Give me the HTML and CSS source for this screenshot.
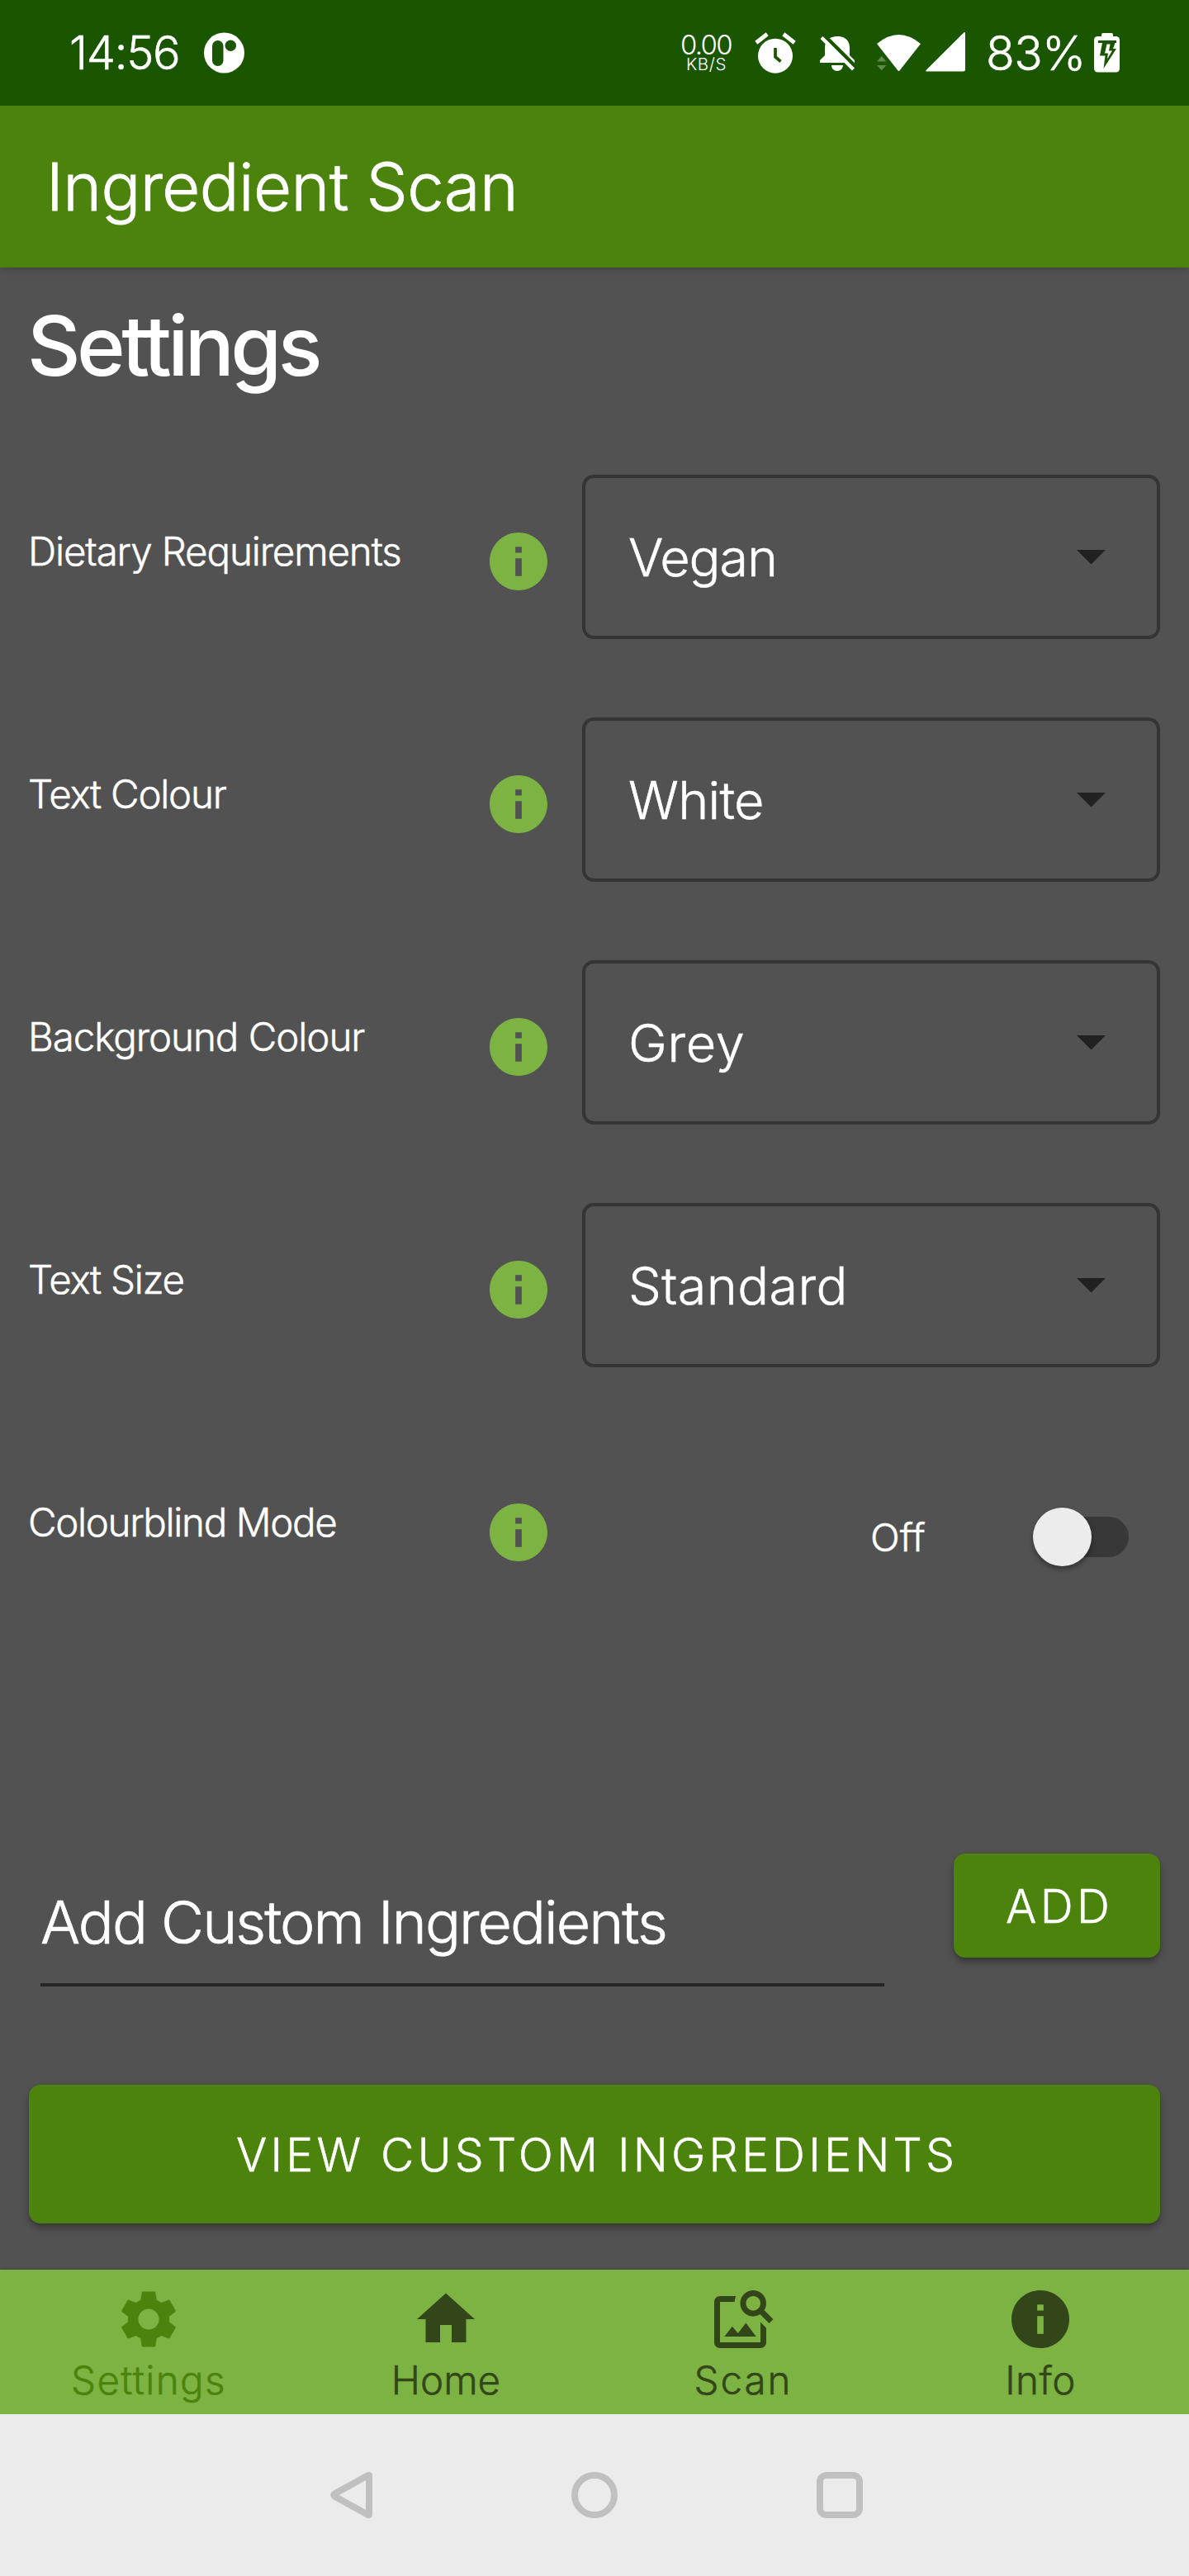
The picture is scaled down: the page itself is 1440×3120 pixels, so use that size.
FILE: index.html
```html
<!DOCTYPE html>
<html lang="en">
<head>
<meta charset="utf-8">
<title>Ingredient Scan</title>
<link rel="stylesheet" href="styles.css">
</head>
<body>
<svg class="defs" aria-hidden="true">
  <symbol id="info" viewBox="0 0 24 24"><path d="M12 2C6.48 2 2 6.48 2 12s4.48 10 10 10 10-4.48 10-10S17.52 2 12 2zm1.1 15.1h-2.2v-6.2h2.2v6.2zm0-8.1h-2.2V6.9h2.2V9z"/></symbol>
  <symbol id="arrow" viewBox="0 0 35 18"><path d="M0 0h35L17.5 17.5z"/></symbol>
</svg>
<div class="phone">
  <header class="status">
    <span class="time">14:56</span>
    <svg class="app-badge" width="49" height="50" viewBox="0 0 49 50"><circle cx="24.5" cy="25" r="24.5" fill="#fff"/><rect x="10" y="10" width="13.5" height="31" rx="6.7" fill="#1a5600"/><circle cx="32.3" cy="16.3" r="6.7" fill="#1a5600"/></svg>
    <div class="speed"><span class="rate">0.00</span><span class="unit">KB/S</span></div>
    <svg class="alarm" width="50" height="50" viewBox="0 0 50 50"><circle cx="25" cy="28.7" r="21" fill="#fff"/><path d="M1.8 12.8L15.2 2.2M48.2 12.8L34.8 2.2" stroke="#fff" stroke-width="5"/><path d="M25 19v11l6.5 5.5" fill="none" stroke="#1a5600" stroke-width="3.7"/></svg>
    <svg class="bell" width="43" height="50" viewBox="0 0 43 50"><path d="M0 37v-3l6-6V19C6 10 12 5 21 5s15 5 15 14v9l6 6v3zM14 40h14c0 4-3 7-7 7s-7-3-7-7z" fill="#fff"/><path d="M3.5 2L44 42.5" stroke="#1a5600" stroke-width="4.5"/><path d="M2 6.5L40.5 45" stroke="#fff" stroke-width="4.2"/></svg>
    <svg class="wifi" width="54" height="50" viewBox="0 0 54 50"><path d="M0 14Q26.5-8 53 14L27.5 46.5q-1 1-2 0z" fill="#fff"/><path d="M0 35.5h11.5L5.7 29zM0 40h11.5L5.7 46.3z" fill="#5e8a4c"/></svg>
    <svg class="signal" width="48" height="50" viewBox="0 0 48 50"><path d="M46 .7q2-1.5 2 .8V45q0 2.5-2.5 2.5H1.5Q-.7 47.5.8 45.7z" fill="#fff"/></svg>
    <span class="percent">83%</span>
    <svg class="battery" width="32" height="50" viewBox="0 0 32 50"><path d="M9 7V3q0-2 2-2h10q2 0 2 2v4z" fill="#fff"/><rect y="5" width="31" height="43.5" rx="4.5" fill="#fff"/><path d="M5 10h22v3h-1.5L23 20h4L11.500 44l2-15.500H7L10 13H5z" fill="#1a5600"/><path d="M15.500 14.500h4l-1.500 8h4L16 32.500l1-7h-4z" fill="#fff"/></svg>
  </header>
  <div class="appbar">Ingredient Scan</div>
  <main>
    <h1>Settings</h1>
    <section class="row">
      <span class="label dietary">Dietary Requirements</span><svg class="info"><use href="#info"/></svg>
      <div class="select"><span class="vegan">Vegan</span><svg class="arrow"><use href="#arrow"/></svg></div>
    </section>
    <section class="row">
      <span class="label">Text Colour</span><svg class="info"><use href="#info"/></svg>
      <div class="select"><span class="white">White</span><svg class="arrow"><use href="#arrow"/></svg></div>
    </section>
    <section class="row">
      <span class="label background">Background Colour</span><svg class="info"><use href="#info"/></svg>
      <div class="select"><span class="grey">Grey</span><svg class="arrow"><use href="#arrow"/></svg></div>
    </section>
    <section class="row">
      <span class="label">Text Size</span><svg class="info"><use href="#info"/></svg>
      <div class="select"><span class="standard">Standard</span><svg class="arrow"><use href="#arrow"/></svg></div>
    </section>
    <section class="row">
      <span class="label colourblind">Colourblind Mode</span><svg class="info"><use href="#info"/></svg>
      <div class="toggle"><span>Off</span><div class="track"><div class="thumb"></div></div></div>
    </section>
    <section class="custom">
      <div class="field">Add Custom Ingredients</div>
      <div class="btn add">ADD</div>
    </section>
    <div class="btn view">VIEW CUSTOM INGREDIENTS</div>
  </main>
  <nav class="tabs">
    <div class="tab active">
      <svg viewBox="0 0 24 24"><path d="M19.14 12.94c.04-.3.06-.61.06-.94 0-.32-.02-.64-.07-.94l2.03-1.58c.18-.14.23-.41.12-.61l-1.92-3.32c-.12-.22-.37-.29-.59-.22l-2.39.96c-.5-.38-1.03-.7-1.62-.94l-.36-2.54c-.04-.24-.24-.41-.48-.41h-3.84c-.24 0-.43.17-.47.41l-.36 2.54c-.59.24-1.13.57-1.62.94l-2.39-.96c-.22-.08-.47 0-.59.22L2.74 8.87c-.12.21-.08.47.12.61l2.03 1.58c-.05.3-.09.63-.09.94s.02.64.07.94l-2.03 1.58c-.18.14-.23.41-.12.61l1.92 3.32c.12.22.37.29.59.22l2.39-.96c.5.38 1.03.7 1.62.94l.36 2.54c.05.24.24.41.48.41h3.84c.24 0 .44-.17.47-.41l.36-2.54c.59-.24 1.13-.56 1.62-.94l2.39.96c.22.08.47 0 .59-.22l1.92-3.32c.12-.22.07-.47-.12-.61l-2.01-1.58zM12 15.6c-1.98 0-3.6-1.62-3.6-3.6s1.62-3.6 3.6-3.6 3.6 1.62 3.6 3.6-1.62 3.6-3.6 3.6z"/></svg>
      <span class="t-settings">Settings</span>
    </div>
    <div class="tab">
      <svg viewBox="0 0 24 24"><path d="M10 20v-6h4v6h5v-8h3L12 3 2 12h3v8z"/></svg>
      <span>Home</span>
    </div>
    <div class="tab">
      <svg viewBox="0 0 24 24"><path d="M18 13v7H4V6h5.02c.05-.71.22-1.38.48-2H4c-1.1 0-2 .9-2 2v14c0 1.1.9 2 2 2h14c1.1 0 2-.9 2-2v-5l-2-2zm-1.5 5h-11l2.75-3.53 1.96 2.36 2.75-3.54L16.5 18zm2.8-9.11c.44-.7.7-1.51.7-2.39C20 4.01 17.99 2 15.5 2S11 4.01 11 6.5s2.01 4.5 4.49 4.5c.88 0 1.7-.26 2.39-.7L21 13.42 22.42 12 19.3 8.89zM15.5 9C14.12 9 13 7.88 13 6.5S14.12 4 15.5 4 18 5.12 18 6.5 16.88 9 15.5 9z"/></svg>
      <span class="t-scan">Scan</span>
    </div>
    <div class="tab">
      <svg viewBox="0 0 24 24"><use href="#info"/></svg>
      <span class="t-info">Info</span>
    </div>
  </nav>
  <footer class="sysnav">
    <svg width="52" height="58" viewBox="0 0 52 58"><path d="M47 5.500v47Q47 54 45 52.500L6 31q-3.500-2 0-4L45 5.500Q47 4 47 5.500z"/></svg>
    <svg width="58" height="58" viewBox="0 0 58 58"><circle cx="29" cy="29" r="24"/></svg>
    <svg width="58" height="58" viewBox="0 0 58 58"><rect x="5" y="5" width="48" height="48" rx="8"/></svg>
  </footer>
</div>
</body>
</html>
```
FILE: styles.css
```css
* { box-sizing: border-box; }
body {
  margin: 0;
  background: #525252;
  color: #fff;
  font-family: Inter, "Liberation Sans", sans-serif;
  font-weight: 300;
  -webkit-text-stroke: .5px currentColor;
}
svg { display: block; flex: none; }
.defs { display: none; }
.phone { width: 1440px; height: 3120px; display: flex; flex-direction: column; overflow: hidden; white-space: nowrap; }

.status { position: relative; z-index: 1; height: 128px; display: flex; align-items: center; padding-left: 84px; background: #1a5600; flex: none; }
.time { width: 163px; font-size: 56px; letter-spacing: -1.3px; }
.speed { display: flex; flex-direction: column; margin-left: 528px; width: 90px; padding-top: 3px; -webkit-text-stroke-width: 0; }
.rate { font-size: 33px; line-height: 24px; letter-spacing: -1.7px; }
.unit { font-size: 20.5px; line-height: 23px; letter-spacing: .6px; padding-left: 7px; }
.bell { margin-left: 29px; }
.wifi { margin-left: 26px; }
.signal { margin-left: 5px; }
.percent { width: 131px; margin-left: 25px; font-size: 57px; letter-spacing: -.7px; }

.appbar {
  height: 196px; line-height: 196px; padding-left: 56px; flex: none;
  background: #4b830d; font-size: 79.5px; letter-spacing: -.6px;
  -webkit-text-stroke-width: .9px;
  box-shadow: 0 2px 12px rgba(0, 0, 0, .2);
}

main { flex: 1; padding: 0 35px; display: flex; flex-direction: column; }
h1 { margin: 0 0 15px; height: 189px; line-height: 189px; font-size: 100px; font-weight: 500; letter-spacing: -4.6px; text-indent: -2px; -webkit-text-stroke-width: 0; }

.row { height: 294px; display: flex; align-items: center; }
.label { width: 551px; padding-bottom: 15px; font-size: 47.5px; letter-spacing: -1.27px; text-indent: -1px; }
.dietary { letter-spacing: -1.15px; }
.background { letter-spacing: -1.07px; }
.colourblind { letter-spacing: -1.36px; }
.info { width: 84px; height: 84px; margin: 10px 35px 0 0; fill: #7cb342; }
.select {
  width: 700px; height: 199px; margin-top: -1px; border: 4px solid #353535; border-radius: 14px;
  display: flex; align-items: center; justify-content: space-between;
  padding: 1px 62px 0 52px; font-size: 63px;
}
.arrow { width: 35px; height: 18px; fill: #212121; }
.vegan { letter-spacing: -1.08px; }
.white { letter-spacing: -.74px; }
.grey { letter-spacing: .66px; }
.standard { letter-spacing: .4px; }

.toggle { width: 700px; padding: 21px 38px 0 0; display: flex; align-items: center; justify-content: flex-end; font-size: 47px; }
.toggle span { width: 202px; }
.track { width: 111px; height: 49px; border-radius: 25px; background: #383838; display: flex; align-items: center; }
.thumb { width: 71px; height: 71px; border-radius: 50%; margin-left: -5px; background: #ececec; box-shadow: 0 4px 6px rgba(0, 0, 0, .35); flex: none; }

.custom { margin-top: 247px; height: 161px; display: flex; justify-content: space-between; align-items: flex-start; padding-left: 14px; }
.field { width: 1022px; height: 161px; padding-top: 9px; border-bottom: 4px solid #262626; display: flex; align-items: center; font-size: 71.5px; letter-spacing: -1.97px; -webkit-text-stroke-width: .7px; }
.btn {
  display: flex; align-items: center; border-radius: 14px; background: #4b830d;
  box-shadow: 0 6px 9px rgba(0, 0, 0, .28), 0 1px 3px rgba(0, 0, 0, .15);
  font-size: 55.5px;
}
.add { width: 250px; height: 126px; padding-left: 63px; letter-spacing: 4.36px; }
.view { margin-top: 119px; height: 168px; padding-left: 251px; letter-spacing: 4.18px; }

.tabs { height: 175px; flex: none; display: flex; background: #7cb342; color: #33461a; box-shadow: 0 0 6px rgba(0, 0, 0, .22); }
.tab { width: 360px; padding-top: 18px; display: flex; flex-direction: column; align-items: center; font-size: 47.5px; }
.tab svg { width: 84px; height: 84px; fill: currentColor; }
.tab span { line-height: 64px; }
.active { color: #4b830d; }
.t-settings { letter-spacing: 1.36px; }
.t-scan { letter-spacing: 1.96px; }
.t-info { letter-spacing: .46px; }

.sysnav { position: relative; height: 196px; flex: none; display: flex; align-items: center; padding-left: 400px; background: #ebebeb; }
.sysnav svg { fill: none; stroke: #c0c0c0; stroke-width: 8px; stroke-linejoin: round; }
.sysnav svg + svg { margin-left: 239px; }
```
